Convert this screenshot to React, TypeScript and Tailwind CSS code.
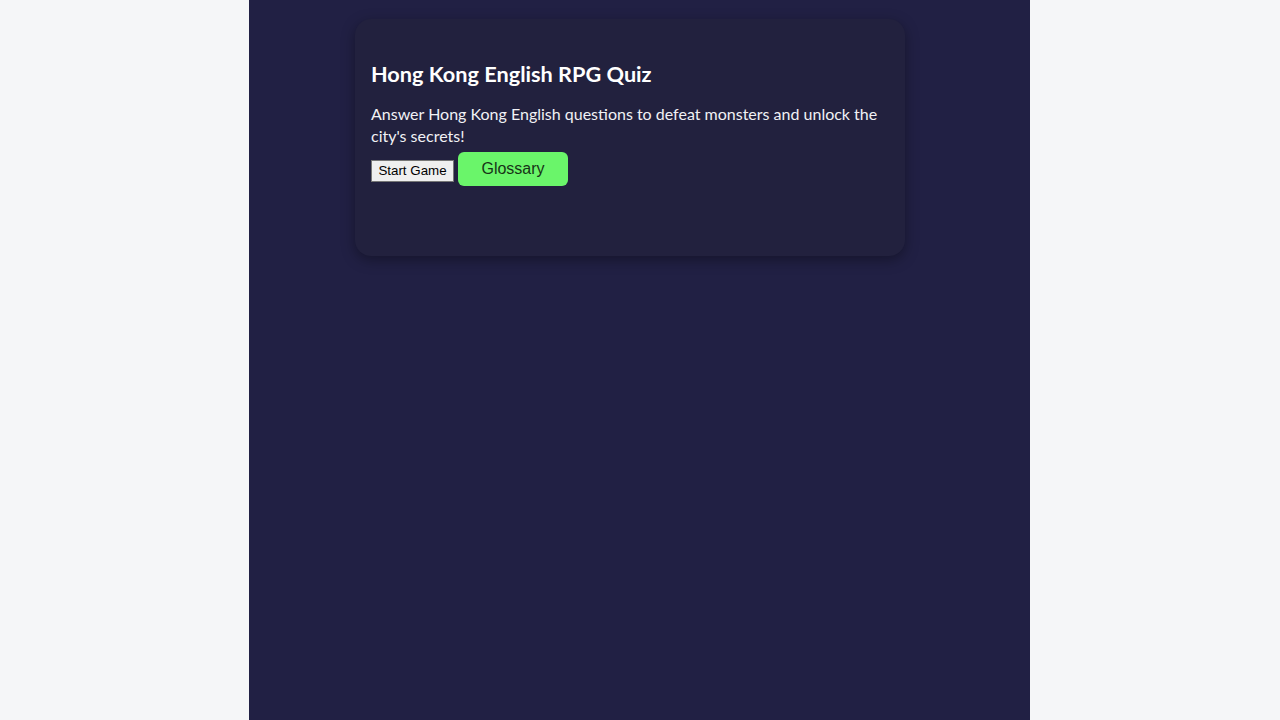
import React from 'react';

function App() {
    return (
        <div className="min-h-screen bg-[#f5f6f8]">
            {/* game column */}
            <div className="ml-[249px] w-[781px] min-h-screen bg-[#212044] pt-[19px] pl-[106px]">
                <div className="w-[550px] h-[237px] rounded-2xl bg-[#22213e] px-4 pt-[43px] shadow-[0_4px_14px_rgba(0,0,0,0.35)] font-['Lato',sans-serif] text-white">
                    <h2 className="text-[21.7px] font-bold leading-6 mb-[17px]">Hong Kong English RPG Quiz</h2>
                    <p className="text-[16px] leading-[22px] text-[#f1f1f5]">
                        Answer Hong Kong English questions to defeat monsters and unlock the city's secrets!
                    </p>
                    <div className="flex items-start gap-1 mt-[5px]">
                        <button className="mt-[8px] w-[83px] h-[22px] bg-[#efefef] border border-[#767676] text-[13.33px] text-black font-['Liberation_Sans',sans-serif] leading-none">
                            Start Game
                        </button>
                        <button className="w-[110px] h-[34px] rounded-md bg-[#6af56a] text-[16px] text-[#173317] font-['Liberation_Sans',sans-serif]">
                            Glossary
                        </button>
                    </div>
                </div>
            </div>
        </div>
    );
}

export default App;
